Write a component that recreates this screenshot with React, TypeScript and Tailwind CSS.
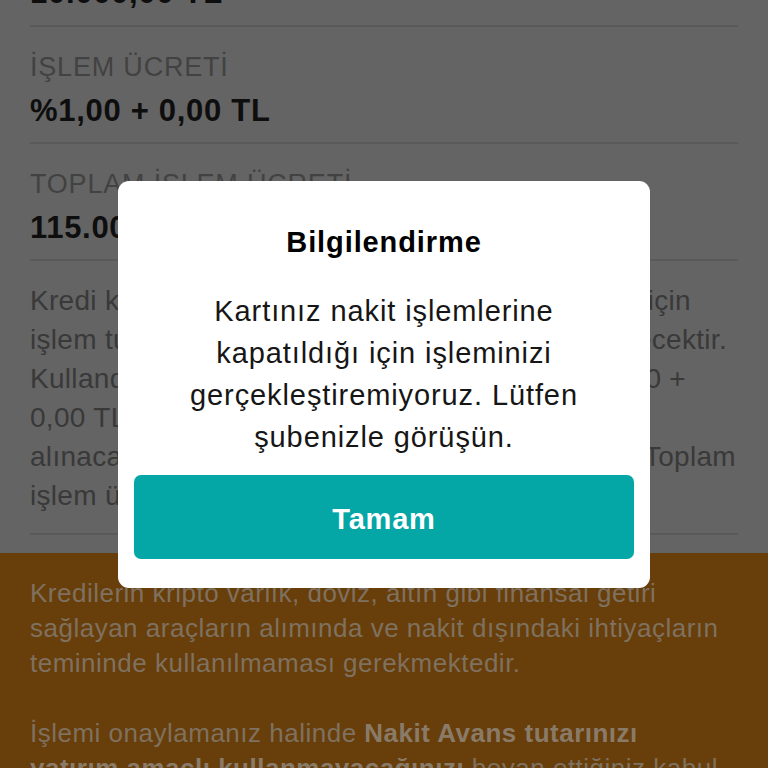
import React from "react";

function Divider() {
  return <div className="h-[2px] bg-[#595959]" />;
}

function Row({ label, value }: { label: string; value: string }) {
  return (
    <div className="flex flex-col pt-[24px] pb-[13px]">
      <div className="text-[27px] leading-[32px] tracking-[0.8px] text-[#424242] whitespace-nowrap">
        {label}
      </div>
      <div className="mt-[10px] text-[31px] leading-[36px] font-bold tracking-[0.7px] text-[#0e0e0e] whitespace-nowrap">
        {value}
      </div>
    </div>
  );
}

function SplitLine({ left, right, pr }: { left: string; right?: string; pr: string }) {
  return (
    <div className={`flex justify-between h-[39px] ${pr}`}>
      <span className="flex-1 min-w-0 overflow-hidden whitespace-nowrap">{left}</span>
      {right ? <span className="shrink-0 whitespace-nowrap">{right}</span> : null}
    </div>
  );
}

export default function App() {
  return (
    <div className="relative w-[768px] h-[768px] overflow-hidden bg-[#646464] font-['Liberation_Sans',Arial,sans-serif]">
      <div className="flex flex-col">
        <div className="flex flex-col px-[30px]">
          <div className="-mt-[25px] pb-[14px] text-[31px] leading-[36px] font-bold tracking-[0.7px] text-[#0e0e0e] whitespace-nowrap">
            10.000,00 TL
          </div>
          <Divider />
          <Row label="İŞLEM ÜCRETİ" value="%1,00 + 0,00 TL" />
          <Divider />
          <Row label="TOPLAM İŞLEM ÜCRETİ" value="115.000,00 TL" />
          <Divider />
          <div className="flex flex-col pt-[20px] pb-[18px] text-[28px] leading-[39px] tracking-[0.3px] text-[#393939]">
            <SplitLine left="Kredi kartınızdan yapacağınız nakit avans işlemleri" right="için" pr="pr-[47px]" />
            <SplitLine left="işlem tutarı üzerinden işlem ücreti tahsil" right="edilecektir." pr="pr-[11px]" />
            <SplitLine left="Kullandığınız nakit avans tutarı üzerinden" right="%1,00 +" pr="pr-[52px]" />
            <SplitLine left="0,00 TL işlem ücreti" pr="pr-0" />
            <SplitLine left="alınacaktır. Hesaplanan" right="Toplam" pr="pr-[2px]" />
            <SplitLine left="işlem ücreti aşağıda gösterilmektedir." pr="pr-0" />
          </div>
          <Divider />
        </div>
        <div className="mt-[18px] bg-[#683e0b] px-[30px] pt-[23px] pb-[40px] text-[26px] leading-[35px] tracking-[0.5px] text-[#7f715f] whitespace-nowrap">
          Kredilerin kripto varlık, döviz, altın gibi finansal getiri
          <br />
          sağlayan araçların alımında ve nakit dışındaki ihtiyaçların
          <br />
          temininde kullanılmaması gerekmektedir.
          <br />
          <br />
          İşlemi onaylamanız halinde <span className="font-bold text-[#8a7b69]">Nakit Avans tutarınızı</span>
          <br />
          <span className="font-bold text-[#8a7b69]">yatırım amaçlı kullanmayacağınızı</span> beyan ettiğiniz kabul
          <br />
          edilecektir.
        </div>
      </div>

      <div className="absolute left-[118px] top-[181px] w-[532px] h-[407px] bg-white rounded-[11px] flex flex-col px-[16px] pt-[43px] pb-[29px]">
        <div className="text-center text-[29px] leading-[36px] font-bold tracking-[0.9px] text-black">
          Bilgilendirme
        </div>
        <div className="mt-[30px] text-center text-[29px] leading-[42px] tracking-[0.9px] text-[#161616]">
          Kartınız nakit işlemlerine
          <br />
          kapatıldığı için işleminizi
          <br />
          gerçekleştiremiyoruz. Lütfen
          <br />
          şubenizle görüşün.
        </div>
        <button className="mt-[17px] h-[84px] w-full rounded-[7px] bg-[#05a6a6] pt-[5px] text-white text-[29px] font-bold tracking-[0.8px] flex items-center justify-center">
          Tamam
        </button>
      </div>
    </div>
  );
}
